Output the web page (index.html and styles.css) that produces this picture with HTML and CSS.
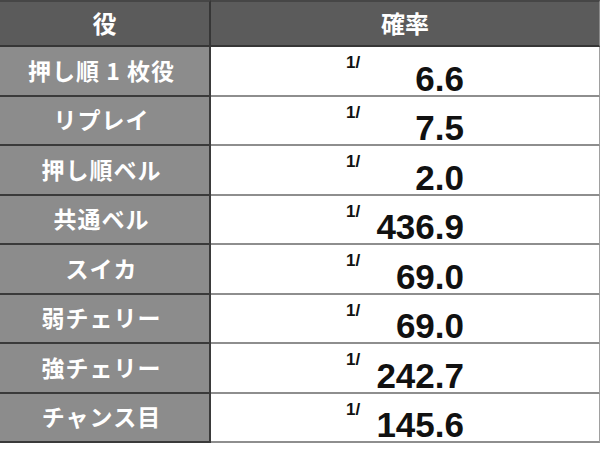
FILE: index.html
```html
<!DOCTYPE html>
<html lang="ja">
<head>
<meta charset="utf-8">
<link rel="stylesheet" href="styles.css">
</head>
<body>
<div class="table">
  <div class="cell head head-l">役</div>
  <div class="cell head head-r">確率</div>

  <div class="cell name">押し順 1 枚役</div>
  <div class="cell rate"><div class="frac"><span class="one">1/</span><span class="num">6.6</span></div></div>

  <div class="cell name">リプレイ</div>
  <div class="cell rate"><div class="frac"><span class="one">1/</span><span class="num">7.5</span></div></div>

  <div class="cell name">押し順ベル</div>
  <div class="cell rate"><div class="frac"><span class="one">1/</span><span class="num">2.0</span></div></div>

  <div class="cell name">共通ベル</div>
  <div class="cell rate"><div class="frac"><span class="one">1/</span><span class="num">436.9</span></div></div>

  <div class="cell name">スイカ</div>
  <div class="cell rate"><div class="frac"><span class="one">1/</span><span class="num">69.0</span></div></div>

  <div class="cell name">弱チェリー</div>
  <div class="cell rate"><div class="frac"><span class="one">1/</span><span class="num">69.0</span></div></div>

  <div class="cell name">強チェリー</div>
  <div class="cell rate"><div class="frac"><span class="one">1/</span><span class="num">242.7</span></div></div>

  <div class="cell name">チャンス目</div>
  <div class="cell rate"><div class="frac"><span class="one">1/</span><span class="num">145.6</span></div></div>
</div>
</body>
</html>
```
FILE: styles.css
```css
html, body {
  margin: 0;
  padding: 0;
  background: #ffffff;
}

.table {
  display: grid;
  grid-template-columns: 211px 389px;
  grid-template-rows: 47px repeat(8, 49.5px);
  width: 600px;
  box-sizing: border-box;
}

.cell {
  box-sizing: border-box;
  display: flex;
  align-items: center;
  justify-content: center;
}

.head {
  background: #5b5b5b;
  color: #ffffff;
  font-family: "Noto Sans CJK JP", sans-serif;
  font-weight: 700;
  font-size: 24px;
  border-top: 2px solid #464646;
  border-bottom: 2px solid #363636;
  padding-bottom: 2px;
}

.head-l {
  border-right: 2px solid #363636;
}

.head-r {
  border-right: 1px solid #8a8a8a;
}

.name {
  background: #8c8c8c;
  color: #ffffff;
  font-family: "Noto Sans CJK JP", sans-serif;
  font-weight: 700;
  font-size: 23px;
  letter-spacing: 1px;
  border-right: 2px solid #3a3a3a;
  border-bottom: 2px solid #3a3a3a;
  padding-right: 6px;
  padding-bottom: 2px;
  white-space: pre;
}

.rate {
  background: #ffffff;
  border-bottom: 2px solid #8e8e8e;
  border-right: 1px solid #a0a0a0;
  align-items: stretch;
}

.frac {
  width: 118px;
  display: flex;
  justify-content: space-between;
  color: #111111;
  font-family: "Liberation Sans", Arial, sans-serif;
  font-weight: 700;
}

.one {
  font-size: 17px;
  line-height: 1;
  padding-top: 7px;
  align-self: flex-start;
}

.num {
  font-size: 35px;
  line-height: 1;
  align-self: flex-end;
  margin-bottom: -1px;
}
```
